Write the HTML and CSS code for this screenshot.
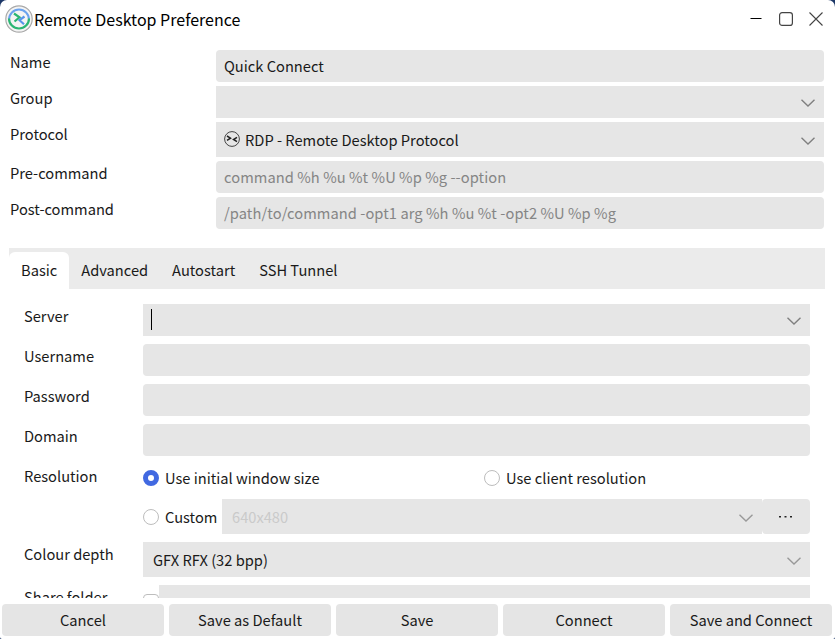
FILE: index.html
```html
<!DOCTYPE html>
<html lang="en">
<head>
<meta charset="utf-8">
<title>Remote Desktop Preference</title>
<link rel="stylesheet" href="styles.css">
</head>
<body>
<div class="window">
  <header class="titlebar">
    <svg class="logo" viewBox="0 0 30 30" width="30" height="30">
      <circle cx="15" cy="15" r="13.2" fill="#f4f4f4" stroke="#a9a9a9" stroke-width="1.2"/>
      <path d="M5 15.5a10 10 0 0 1 20 0" fill="none" stroke="#6ba3ee" stroke-width="2"/>
      <path d="M25 14.5a10 10 0 0 1-20 0" fill="none" stroke="#2bb673" stroke-width="2.2"/>
      <path d="M10 9.5l5.5 3.8-5 4.2" fill="none" stroke="#2bb673" stroke-width="2.2"/>
      <path d="M20.5 12.5l-5 3.7 4.5 4" fill="none" stroke="#5795ea" stroke-width="2.2"/>
    </svg>
    <h1 class="title">Remote Desktop Preference</h1>
    <div class="controls">
      <svg viewBox="0 0 12 16" width="12" height="16"><path d="M.5 7.5h11" stroke="#000"/></svg>
      <svg viewBox="0 0 14 14" width="14" height="14"><rect x=".6" y=".6" width="12.8" height="12.8" rx="2.5" fill="none" stroke="#444" stroke-width="1.2"/></svg>
      <svg viewBox="0 0 14 14" width="14" height="14"><path d="M.5.5l13 13M13.5.5l-13 13" stroke="#444" stroke-width="1.1"/></svg>
    </div>
  </header>

  <section class="profile">
    <div class="label">Name</div><div class="field">Quick Connect</div>
    <div class="label">Group</div><div class="field combo"><svg class="chevron" viewBox="0 0 14 8"><path d="M.5.7L7 7 13.5.7"/></svg></div>
    <div class="label">Protocol</div>
    <div class="field combo tall">
      <svg class="rdp" viewBox="0 0 16 16"><circle cx="8" cy="8" r="7.4" fill="none" stroke="#444" stroke-width="1"/><path d="M3 5l3.5 2.2L3 9.4M13 6.3L9.5 8.5l3.5 2.2" fill="none" stroke="#222" stroke-width="1.5"/></svg>
      RDP - Remote Desktop Protocol
      <svg class="chevron" viewBox="0 0 14 8"><path d="M.5.7L7 7 13.5.7"/></svg>
    </div>
    <div class="label">Pre-command</div><div class="field hint">command %h %u %t %U %p %g --option</div>
    <div class="label">Post-command</div><div class="field hint">/path/to/command -opt1 arg %h %u %t -opt2 %U %p %g</div>
  </section>

  <nav class="tabs">
    <div class="tab active">Basic</div><div class="tab">Advanced</div><div class="tab">Autostart</div><div class="tab">SSH Tunnel</div>
  </nav>

  <section class="settings">
    <div class="label">Server</div><div class="field combo"><i class="caret"></i><svg class="chevron" viewBox="0 0 14 8"><path d="M.5.7L7 7 13.5.7"/></svg></div>
    <div class="label">Username</div><div class="field"></div>
    <div class="label">Password</div><div class="field"></div>
    <div class="label">Domain</div><div class="field"></div>
    <div class="label">Resolution</div>
    <div class="resolution">
      <div class="choices">
        <div class="choice"><i class="radio on"></i><span>Use initial window size</span></div>
        <div class="choice"><i class="radio"></i><span>Use client resolution</span></div>
      </div>
      <div class="custom">
        <div class="choice"><i class="radio"></i><span>Custom</span></div>
        <div class="field combo tall disabled">640x480<svg class="chevron" viewBox="0 0 14 8"><path d="M.5.7L7 7 13.5.7"/></svg></div>
        <div class="more"><svg viewBox="0 0 13 2" width="13" height="2"><path d="M0 0h2v1.5H0zM5.5 0h2v1.5h-2zM11 0h2v1.5h-2z" fill="#222"/></svg></div>
      </div>
    </div>
    <div class="label">Colour depth</div>
    <div class="field combo tall depth">GFX RFX (32 bpp)<svg class="chevron" viewBox="0 0 14 8"><path d="M.5.7L7 7 13.5.7"/></svg></div>
    <div class="label">Share folder</div>
    <div class="share"><i class="check"></i><div class="field combo tall"></div></div>
  </section>

  <footer class="actions">
    <div class="button">Cancel</div><div class="button">Save as Default</div><div class="button">Save</div><div class="button">Connect</div><div class="button">Save and Connect</div>
  </footer>
</div>
</body>
</html>
```
FILE: styles.css
```css
* { box-sizing: border-box; }
body {
  margin: 0;
  background: #1d3868;
  font: 14.67px/24px "Noto Sans CJK SC", "Noto Sans", sans-serif;
  color: #1a1a1a;
}
.window {
  width: 835px;
  height: 639px;
  display: flex;
  flex-direction: column;
  overflow: hidden;
  background: #fff;
  border-radius: 7px 7px 2px 2px;
}
.titlebar {
  height: 50px;
  flex: none;
  display: flex;
  align-items: flex-start;
  padding: 4px 12px 0 4px;
}
.title { margin: 3px 0 0; font-size: 16px; font-weight: 400; line-height: 24px; color: #000; }
.controls { margin-left: auto; height: 30px; display: flex; align-items: center; gap: 16.5px; }
.profile {
  display: grid;
  grid-template-columns: 206px 608px;
  grid-template-rows: 32px 32px 35px 32px 32px;
  row-gap: 4px;
  padding-left: 10px;
}
.label { height: 24px; white-space: nowrap; }
.field {
  height: 32px;
  display: flex;
  align-items: center;
  padding: 0 8px;
  background: #e6e6e6;
  border-radius: 4px;
  white-space: nowrap;
}
.combo { border-radius: 0; }
.tall { height: 35px; }
.hint { color: #858585; letter-spacing: .07px; }
.chevron {
  width: 14px;
  height: 8px;
  margin: 2px 1px 0 auto;
  fill: none;
  stroke: #808080;
  stroke-width: 1.4;
}
.rdp { width: 16px; height: 16px; margin: 0 5px 2px 0; }
.tabs {
  display: flex;
  flex: none;
  height: 41px;
  margin: 19px 10px 0 9px;
  padding-top: 4px;
  background: #ebebeb;
}
.tab { padding: 6px 12px 0; }
.active { background: #fff; border-radius: 6px 6px 0 0; }
.settings {
  height: 309px;
  flex: none;
  overflow: hidden;
  display: grid;
  grid-template-columns: 119px 667px;
  grid-template-rows: 32px 32px 32px 32px 70px 35px 35px;
  row-gap: 8px;
  padding: 15px 0 0 24px;
}
.caret { width: 1px; height: 21px; margin-bottom: 1px; background: #000; }
.choices { display: grid; grid-template-columns: 341px 1fr; height: 28px; margin-bottom: 7px; }
.choice { display: flex; align-items: center; gap: 6px; white-space: nowrap; }
.radio { width: 16px; height: 16px; border: 1px solid #bdbdbd; border-radius: 50%; background: #fff; }
.on { border: 5px solid #4169e1; }
.custom { display: flex; height: 35px; }
.custom .choice { width: 79px; flex: none; }
.custom .field { flex: 1; padding-left: 10px; }
.disabled { color: #cacaca; }
.custom .chevron, .depth .chevron { stroke: #999; }
.more {
  width: 48px;
  padding-right: 2px;
  display: flex;
  align-items: center;
  justify-content: center;
  background: #e6e6e6;
  border-radius: 4px;
}
.depth { padding-left: 10px; }
.share { display: flex; }
.share .field { flex: 1; }
.check { width: 16px; height: 16px; margin-top: 9px; border: 1px solid #bdbdbd; border-radius: 4px; }
.actions { display: flex; gap: 5px; padding: 6px 3px 3px 2px; }
.button { width: 162px; height: 32px; line-height: 32px; text-align: center; background: #e5e5e5; border-radius: 4px; }
```
